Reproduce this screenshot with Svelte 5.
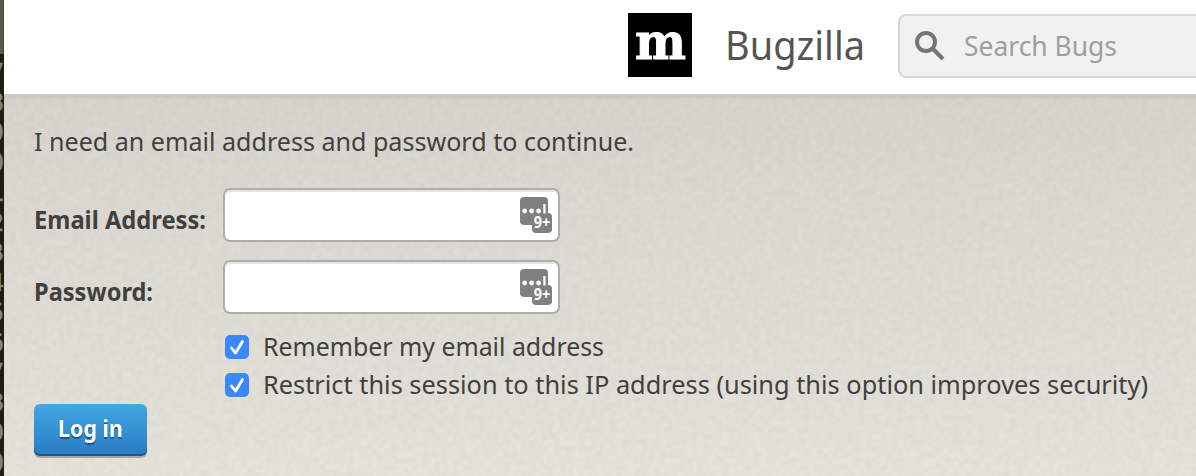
<script>
  const lines = ['7', '8', '9', '0', '1', '2', '3', '4', '5', '6', '7', '8', '9', '0'];
  const fields = [
    { id: 'email', label: 'Email Address:', type: 'text', width: 172 },
    { id: 'password', label: 'Password:', type: 'password', width: 119 }
  ];
  const options = [
    { text: 'Remember my email address', width: 341 },
    { text: 'Restrict this session to this IP address (using this option improves security)', width: 885 }
  ];
</script>

{#snippet label(text, width, size, weight = 400)}
  <svg class="fit" {width} height="40" font-size={size} font-weight={weight}>
    <text x="0" y="29" textLength={width} lengthAdjust="spacingAndGlyphs">{text}</text>
  </svg>
{/snippet}

<div class="window">
  <aside class="gutter">
    <div class="tab"></div>
    <div class="numbers">
      {#each lines as n}<span>{n}</span>{/each}
    </div>
  </aside>
  <div class="page">
    <header>
      <svg class="logo" width="64" height="64">
        <rect width="64" height="64" />
        <text x="7" y="45.5" textLength="51" lengthAdjust="spacingAndGlyphs">m</text>
      </svg>
      <div class="brand">{@render label('Bugzilla', 140, 40)}</div>
      <div class="search">
        <svg class="lens" width="32" height="32" viewBox="0 0 32 32">
          <circle cx="12" cy="12" r="9" />
          <path d="M18.5 18.5 29 29" />
        </svg>
        {@render label('Search Bugs', 153, 27)}
      </div>
    </header>
    <main>
      <svg class="texture" width="100%" height="100%">
        <filter id="paper" x="0" y="0" width="100%" height="100%" color-interpolation-filters="sRGB">
          <feTurbulence type="fractalNoise" baseFrequency="0.16" numOctaves="2" seed="4" />
          <feColorMatrix values="0 0 0 0 .35  0 0 0 0 .34  0 0 0 0 .28  .08 0 0 0 -.02" />
        </filter>
        <rect width="100%" height="100%" filter="url(#paper)" />
      </svg>
      <form>
        <div class="intro">{@render label('I need an email address and password to continue.', 600, 25)}</div>
        {#each fields as f}
          <div class="row">
            <label for={f.id}>{@render label(f.label, f.width, 25, 700)}</label>
            <div class="field">
              <input id={f.id} type={f.type} />
              <svg class="manager" width="34" height="38" viewBox="0 0 34 38">
                <rect x="0" y="1" width="28" height="28" rx="4" />
                <rect x="12" y="17" width="20" height="20" rx="4" />
                <g fill="#fff">
                  <circle cx="4.6" cy="15" r="2.4" />
                  <circle cx="11.6" cy="15" r="2.4" />
                  <circle cx="18.6" cy="15" r="2.4" />
                  <rect x="23.3" y="8" width="2.3" height="9.5" />
                  <text x="13.8" y="31.5" textLength="16.5" lengthAdjust="spacingAndGlyphs">9+</text>
                </g>
              </svg>
            </div>
          </div>
        {/each}
        <div class="options">
          {#each options as o}
            <div class="option">
              <svg class="check" width="24" height="24" viewBox="0 0 24 24">
                <rect width="24" height="24" rx="5" />
                <path d="m6.5 13 4 5 7-11.5" />
              </svg>
              {@render label(o.text, o.width, 25)}
            </div>
          {/each}
        </div>
        <button type="button">{@render label('Log in', 65, 24, 700)}</button>
      </form>
    </main>
  </div>
</div>

<style>
  :global(body) { overflow: hidden; }
  .window {
    display: flex;
    width: 1196px;
    height: 476px;
    overflow: hidden;
    font-family: "Noto Sans", "Open Sans", sans-serif;
    color: #404040;
  }
  .gutter { width: 4px; flex: none; overflow: hidden; background: #1d1d17; box-sizing: border-box; }
  .tab { height: 54px; background: #5b5a54; border-right: 1px solid #45443f; }
  .numbers { display: flex; flex-direction: column; align-items: flex-end; width: 4px; padding-top: 4px; }
  .numbers span { height: 30px; flex: none; font: 24px/30px "DejaVu Sans Mono", monospace; color: #85847c; -webkit-text-stroke: 0.6px #85847c; }
  .page { flex: 1; min-width: 0; display: flex; flex-direction: column; }
  header {
    height: 94px;
    flex: none;
    display: flex;
    box-sizing: border-box;
    padding: 13px 0 0 624px;
    background: #fff;
  }
  .fit { display: block; flex: none; overflow: visible; fill: currentColor; }
  .logo { flex: none; }
  .logo text { fill: #fff; stroke: #fff; stroke-width: 1; font: 700 50px "DejaVu Serif", serif; }
  .brand { margin: 18px 0 0 33px; height: 40px; width: 140px; color: #555; }
  .search {
    display: flex;
    flex: none;
    box-sizing: border-box;
    width: 340px;
    height: 64px;
    margin: 1px 0 0 33px;
    padding: 11px 0 0 14px;
    border: 2px solid #d8d8d8;
    border-radius: 8px;
    background: #f1f1f1;
    color: #9e9e9e;
  }
  .lens { margin: 3px 18px 0 0; fill: none; stroke: #757575; stroke-width: 4; }
  main {
    position: relative;
    flex: 1;
    border-top: 2px solid #cacaca;
    background: linear-gradient(#c9c6bc 0, #d9d5ce 4px, #dcdad2 120px, #e6e3dc 100%);
  }
  .texture { position: absolute; inset: 0; }
  form { position: relative; padding: 26px 0 0 30px; }
  .intro { height: 66px; }
  .row { display: flex; height: 72px; }
  .row label { width: 189px; padding-top: 12px; }
  .field { position: relative; width: 337px; height: 54px; }
  input {
    display: block;
    box-sizing: border-box;
    width: 100%;
    height: 100%;
    border: 2px solid #adadae;
    border-radius: 7px;
    background: #fff;
    box-shadow: inset 0 2px 0 #e5e5e5;
    outline: none;
  }
  .manager { position: absolute; left: 297px; top: 8px; fill: #808080; }
  .manager text { font: 700 15.5px "Noto Sans", sans-serif; }
  .options { margin: -4px 0 0 191px; }
  .option { display: flex; align-items: center; height: 38px; gap: 14px; }
  .check { flex: none; fill: #3b88fd; }
  .check path { fill: none; stroke: #fff; stroke-width: 2.8; stroke-linecap: round; stroke-linejoin: round; }
  .option .fit { margin-top: -1px; }
  button {
    display: flex;
    align-items: flex-start;
    box-sizing: border-box;
    width: 113px;
    height: 52px;
    padding: 4px 24px 0;
    border: 0;
    border-radius: 6px;
    background: linear-gradient(#43a6e2, #287bc4);
    box-shadow: inset 0 -2px #1b5991, 0 2px #aaa69f;
    color: #fff;
    font-family: inherit;
    text-align: left;
  }
  button .fit { filter: drop-shadow(0 2px 0 #205b8d); }
</style>
